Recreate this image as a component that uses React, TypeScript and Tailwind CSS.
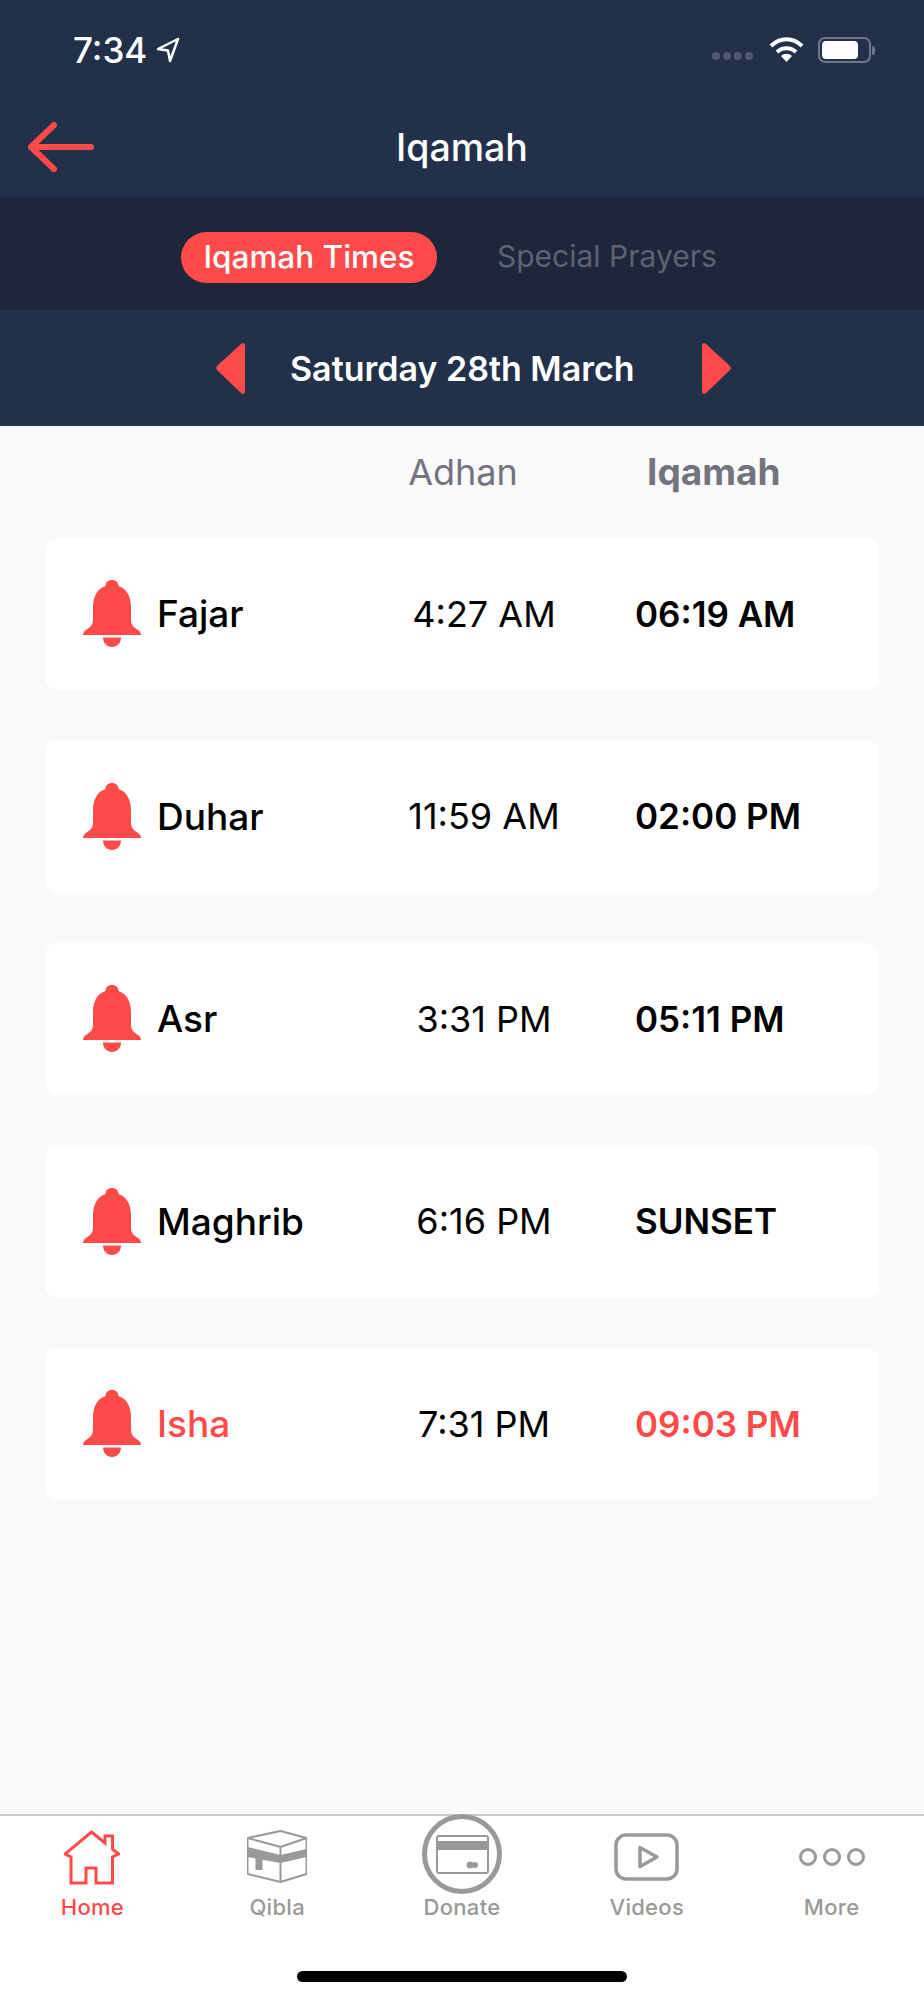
const prayers = [
  { name: 'Fajar', adhan: '4:27 AM', iqamah: '06:19 AM' },
  { name: 'Duhar', adhan: '11:59 AM', iqamah: '02:00 PM' },
  { name: 'Asr', adhan: '3:31 PM', iqamah: '05:11 PM' },
  { name: 'Maghrib', adhan: '6:16 PM', iqamah: 'SUNSET' },
  { name: 'Isha', adhan: '7:31 PM', iqamah: '09:03 PM', active: true },
];

function Bell() {
  return (
    <svg width="58" height="67" viewBox="0 0 58 67" fill="#ff4a4a">
      <path d="M29 0c-4 0-6.500 2.500-6.500 6C13 9 10 18 10 28v11c0 7-3 8-7 11-2 1-3 3-3 5h58c0-2-1-4-3-5-4-3-7-4-7-11V28c0-10-3-19-12.500-22C35.500 2.500 33 0 29 0z" />
      <path d="M20 57.500h18C38 63 34 67 29 67s-9-4-9-9.500z" />
    </svg>
  );
}

function StatusBar() {
  return (
    <div className="flex h-[44px] items-center justify-between pl-[73px] pr-[49px] mt-[28px]">
      <div className="flex items-center gap-[9px]">
        <span className="text-[35px] font-medium leading-none text-white">7:34</span>
        <svg width="24" height="26" viewBox="0 0 24 26" fill="none" stroke="#fff" strokeWidth="2.500" strokeLinejoin="round">
          <path d="M22 2 2 12l10 1.500L14 24z" />
        </svg>
      </div>
      <div className="flex items-center">
        <div className="flex gap-[3px] mt-[12px] mr-[16px]">
          <span className="h-[8px] w-[8px] rounded-full bg-[#4e596f]" />
          <span className="h-[8px] w-[8px] rounded-full bg-[#4e596f]" />
          <span className="h-[8px] w-[8px] rounded-full bg-[#4e596f]" />
          <span className="h-[8px] w-[8px] rounded-full bg-[#4e596f]" />
        </div>
        <svg width="35" height="26" viewBox="0 0 35 26" fill="none" stroke="#fff" strokeWidth="4" className="mr-[14px]">
          <path d="M2 9c9-9 22-9 31 0" />
          <path d="M8 15c5.500-5 13.500-5 19 0" />
          <path d="M17.500 25l-5.500-6c3-3 8-3 11 0z" fill="#fff" stroke="none" />
        </svg>
        <div className="flex items-center">
          <div className="flex h-[26px] w-[53px] items-center rounded-[7px] border-2 border-[#6d778a] p-[2px]">
            <div className="h-full w-[36px] rounded-[4px] bg-white" />
          </div>
          <div className="ml-[1px] h-[9px] w-[3px] rounded-r-full bg-[#6d778a]" />
        </div>
      </div>
    </div>
  );
}

function Kaaba() {
  return (
    <svg width="60" height="54" viewBox="-0.500 0 60 54" fill="none" stroke="#999" strokeWidth="2" strokeLinejoin="round">
      <path d="M33 1 59 8v36L33 52 0 44V8z" />
      <path d="M0 8l33 9 26-9M33 17v35" />
      <path d="M0 17l33 8 26-6v8l-26 6-33-6z" fill="#999" stroke="none" />
      <path d="M8 22h7v18H8z" fill="#999" stroke="none" />
    </svg>
  );
}

function TabBar() {
  return (
    <div className="border-t-2 border-[#cbcbcb] bg-white h-[186px] flex flex-col">
      <div className="grid grid-cols-5">
        <div className="flex flex-col items-center">
          <div className="flex h-[82px] items-center">
            <svg width="56" height="55" viewBox="0 0 56 55" fill="none" stroke="#ff4a4a" strokeWidth="3">
              <path d="M27.500 2 41 13V6h7.500v13l6 5-6 3v26H32V38H22v15H7V27l-6-3z" />
            </svg>
          </div>
          <span className="text-[22px] leading-[18px] font-medium tracking-[0.3px] text-[#ff4a4a]">Home</span>
        </div>
        <div className="flex flex-col items-center">
          <div className="flex h-[82px] items-center">
            <Kaaba />
          </div>
          <span className="text-[22px] leading-[18px] font-medium tracking-[0.3px] text-[#999999]">Qibla</span>
        </div>
        <div className="flex flex-col items-center">
          <div className="flex h-[82px] items-start">
            <svg width="80" height="80" viewBox="0 0 80 80" fill="none" stroke="#999" className="-mt-[2px]">
              <circle cx="40" cy="40" r="37.500" strokeWidth="5" />
              <rect x="15" y="22" width="51" height="37" rx="2" strokeWidth="2" />
              <rect x="15" y="27" width="51" height="9" fill="#999" stroke="none" />
              <circle cx="48" cy="51" r="3.500" fill="#999" stroke="none" />
              <circle cx="53" cy="51" r="3" fill="#999" stroke="none" />
            </svg>
          </div>
          <span className="text-[22px] leading-[18px] font-medium tracking-[0.3px] text-[#999999]">Donate</span>
        </div>
        <div className="flex flex-col items-center">
          <div className="flex h-[82px] items-center">
            <svg width="65" height="48" viewBox="0 0 65 48" fill="none" stroke="#999" strokeWidth="3.500" strokeLinejoin="round">
              <rect x="2" y="2" width="61" height="44" rx="10" />
              <path d="M26 14.500v19l17-9.500z" />
            </svg>
          </div>
          <span className="text-[22px] leading-[18px] font-medium tracking-[0.3px] text-[#999999]">Videos</span>
        </div>
        <div className="flex flex-col items-center">
          <div className="flex h-[82px] items-center">
            <svg width="66" height="18" viewBox="0 0 66 18" fill="none" stroke="#999" strokeWidth="3">
              <circle cx="9" cy="9" r="7.500" />
              <circle cx="33" cy="9" r="7.500" />
              <circle cx="57" cy="9" r="7.500" />
            </svg>
          </div>
          <span className="text-[22px] leading-[18px] font-medium tracking-[0.3px] text-[#999999]">More</span>
        </div>
      </div>
      <div className="mt-auto mb-[18px] h-[11px] w-[330px] self-center rounded-full bg-black" />
    </div>
  );
}

export default function App() {
  return (
    <div className="flex h-[2000px] w-[924px] flex-col bg-[#f9f9f9] font-['Inter',sans-serif]">
      <div className="h-[197px] bg-[#22304a]">
        <StatusBar />
        <div className="mt-[42px] grid h-[66px] grid-cols-[1fr_auto_1fr] items-center px-[28px]">
          <svg width="66" height="50" viewBox="0 0 66 50" fill="none" stroke="#ff4a4a" strokeWidth="6" strokeLinecap="round" strokeLinejoin="round">
            <path d="M63 25H3M26 3 3 25l23 22" />
          </svg>
          <span className="mt-[2px] text-[37.500px] font-medium leading-none text-white">Iqamah</span>
          <span />
        </div>
      </div>

      <div className="flex h-[113px] items-center bg-[#1d263a] pl-[181px] pt-[8px]">
        <div className="flex h-[51px] w-[256px] items-center justify-center rounded-full bg-[#ff4a4a] pb-[2px] text-[31.500px] font-medium text-white">
          Iqamah Times
        </div>
        <span className="mb-[2px] ml-[60px] text-[30px] text-[#5c6373]">Special Prayers</span>
      </div>

      <div className="flex h-[116px] items-center bg-[#22304a] pl-[216px]">
        <svg width="29" height="52" viewBox="0 0 29 52" fill="#ff4a4a"><path d="M27 1c1 0 2 1 2 2v46c0 2-1 3-2 3-1 0-2-1-3-2L1 28c-1-1-1-3 0-4L24 3c1-1 2-2 3-2z" /></svg>
        <span className="ml-[45px] w-[343px] whitespace-nowrap text-[34px] font-semibold text-white">Saturday 28th March</span>
        <svg width="29" height="52" viewBox="0 0 29 52" fill="#ff4a4a" className="ml-[69px]"><path d="M2 1C1 1 0 2 0 3v46c0 2 1 3 2 3 1 0 2-1 3-2l23-22c1-1 1-3 0-4L5 3C4 2 3 1 2 1z" /></svg>
      </div>

      <div className="flex-1 px-[45px]">
        <div className="mb-[19.500px] grid h-[92px] grid-cols-[340px_156px_1fr] items-center">
          <span />
          <span className="text-center text-[36px] text-[#73737f]">Adhan</span>
          <span className="ml-[106px] text-[37px] font-bold text-[#73737f]">Iqamah</span>
        </div>
        <div className="flex flex-col gap-[50px]">
          {prayers.map(p => (
            <div key={p.name} className="grid h-[152.500px] grid-cols-[74px_233px_188px_1fr] items-center rounded-[12px] bg-white pl-[38px]">
              <Bell />
              <span className={`text-[37px] font-medium ${p.active ? 'text-[#ff4a4a]' : 'text-black'}`}>{p.name}</span>
              <span className="whitespace-nowrap text-center text-[36px] text-black">{p.adhan}</span>
              <span className={`ml-[57px] text-[35px] font-semibold ${p.active ? 'text-[#ff4a4a]' : 'text-black'}`}>{p.iqamah}</span>
            </div>
          ))}
        </div>
      </div>

      <TabBar />
    </div>
  );
}
